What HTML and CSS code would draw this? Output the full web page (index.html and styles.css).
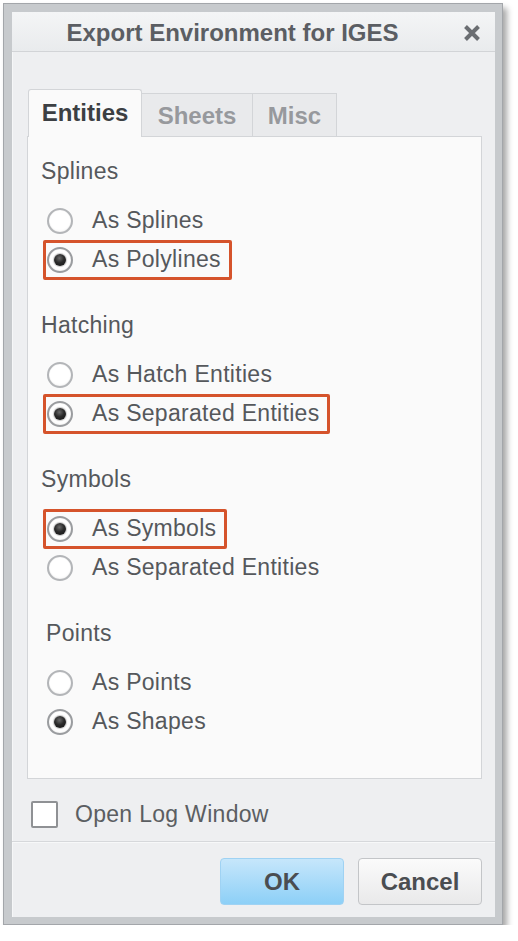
FILE: index.html
```html
<!DOCTYPE html>
<html>
<head>
<meta charset="utf-8">
<link rel="stylesheet" href="styles.css">
</head>
<body>
<div class="dialog">
  <div class="window">
    <div class="titlebar">
      <span class="title">Export Environment for IGES</span>
      <svg class="close" width="18" height="18" viewBox="0 0 18 18"><path d="M2.5 2.5 L15.5 15.5 M15.5 2.5 L2.5 15.5" stroke="#6b6e72" stroke-width="4" stroke-linecap="butt"/></svg>
    </div>
    <div class="content">
      <div class="tabs">
        <div class="tab active">Entities</div>
        <div class="tab">Sheets</div>
        <div class="tab">Misc</div>
      </div>
      <div class="panel">
        <div class="group">
          <div class="label">Splines</div>
          <div class="row"><span class="opt"><span class="radio"></span><span class="text">As Splines</span></span></div>
          <div class="row"><span class="opt hl"><span class="radio on"></span><span class="text">As Polylines</span></span></div>
        </div>
        <div class="group">
          <div class="label">Hatching</div>
          <div class="row"><span class="opt"><span class="radio"></span><span class="text">As Hatch Entities</span></span></div>
          <div class="row"><span class="opt hl"><span class="radio on"></span><span class="text">As Separated Entities</span></span></div>
        </div>
        <div class="group">
          <div class="label">Symbols</div>
          <div class="row"><span class="opt hl"><span class="radio on"></span><span class="text">As Symbols</span></span></div>
          <div class="row"><span class="opt"><span class="radio"></span><span class="text">As Separated Entities</span></span></div>
        </div>
        <div class="group">
          <div class="label indent">Points</div>
          <div class="row"><span class="opt"><span class="radio"></span><span class="text">As Points</span></span></div>
          <div class="row"><span class="opt"><span class="radio on"></span><span class="text">As Shapes</span></span></div>
        </div>
      </div>
      <div class="check-row">
        <span class="checkbox"></span>
        <span class="text">Open Log Window</span>
      </div>
    </div>
    <div class="footer">
      <button class="btn primary">OK</button>
      <button class="btn">Cancel</button>
    </div>
  </div>
</div>
</body>
</html>
```

FILE: styles.css
```css
html, body {
  margin: 0;
  padding: 0;
  background: #ffffff;
}
body {
  font-family: "Liberation Sans", Arial, sans-serif;
  color: #505357;
}
.dialog {
  margin: 3px 0 0 3px;
  width: 500px;
  height: 922px;
  box-sizing: border-box;
  border: 1px solid #a3a6aa;
  background: #c7cacd;
  padding: 8px 7px 7px 8px;
  box-shadow: 4px 5px 6px rgba(0, 0, 0, 0.35);
}
.window {
  height: 100%;
  background: #eeeff1;
  display: flex;
  flex-direction: column;
  box-shadow: inset 1px 1px 0 #f6f7f8;
}
.titlebar {
  height: 40px;
  box-sizing: border-box;
  border-bottom: 1px solid #d2d4d7;
  background: linear-gradient(#f4f5f6, #e9ebed);
  display: flex;
  align-items: center;
  justify-content: center;
  position: relative;
  flex: none;
}
.title {
  font-weight: bold;
  font-size: 24px;
  color: #5b5e63;
  margin-left: -42px;
  margin-top: 2px;
}
.close {
  position: absolute;
  right: 14px;
  top: 12px;
}
.content {
  flex: 1;
  padding: 37px 13px 0 15px;
  display: flex;
  flex-direction: column;
}
.tabs {
  display: flex;
  align-items: flex-end;
  height: 47px;
  margin-left: 1px;
}
.tab {
  height: 43px;
  box-sizing: border-box;
  border: 1px solid #d3d5d8;
  border-bottom: none;
  border-left: none;
  background: #e9eaec;
  font-size: 24px;
  font-weight: bold;
  color: #97999d;
  display: flex;
  align-items: center;
  justify-content: center;
  padding-top: 2px;
}
.tab:nth-child(2) { width: 111px; }
.tab:nth-child(3) { width: 84px; }
.tab.active {
  width: 114px;
  height: 48px;
  margin-bottom: -1px;
  background: #fafafa;
  border-left: 1px solid #d3d5d8;
  border-radius: 3px 3px 0 0;
  color: #3c3f43;
  position: relative;
  z-index: 1;
  padding-top: 0;
  padding-bottom: 1px;
}
.panel {
  height: 643px;
  box-sizing: border-box;
  border: 1px solid #d3d5d8;
  background: #fafafa;
  padding: 19px 0 0 15px;
}
.group {
  margin-bottom: 31px;
}
.label {
  height: 30px;
  line-height: 30px;
  font-size: 23px;
  letter-spacing: 0.3px;
  margin: 0 0 15px -2px;
  color: #55585c;
}
.label.indent {
  margin-left: 3px;
}
.row {
  height: 39px;
  display: flex;
  align-items: center;
}
.opt {
  display: inline-flex;
  align-items: center;
  height: 40px;
  box-sizing: border-box;
  border: 3px solid transparent;
  border-radius: 2px;
  padding: 0 8px 0 1px;
}
.opt.hl {
  border-color: #d5532b;
}
.text {
  font-size: 23px;
  letter-spacing: 0.3px;
  color: #55585c;
}
.radio {
  width: 26px;
  height: 26px;
  box-sizing: border-box;
  border-radius: 50%;
  border: 2px solid #b3b5b8;
  background: radial-gradient(circle at 50% 40%, #ffffff 0, #ffffff 60%, #f0f0f0 100%);
  box-shadow: inset 0 0 1px #d0d0d0;
  margin-right: 19px;
  position: relative;
  flex: none;
}
.radio.on {
  border-color: #9a9c9f;
}
.radio.on::after {
  content: "";
  position: absolute;
  left: 5px;
  top: 5px;
  width: 12px;
  height: 12px;
  border-radius: 50%;
  background: radial-gradient(circle at 45% 35%, #6b6b6b 0, #2a2a2a 45%, #111 100%);
  box-shadow: 0 0 1px 1px #c9c9c9;
}
.check-row {
  display: flex;
  align-items: center;
  height: 27px;
  margin-top: 22px;
  padding-left: 4px;
}
.checkbox {
  width: 27px;
  height: 27px;
  box-sizing: border-box;
  border: 2px solid #8f9194;
  border-radius: 2px;
  background: #ffffff;
  margin-right: 17px;
}
.check-row .text {
  color: #5b5e62;
}
.footer {
  height: 76px;
  box-sizing: border-box;
  flex: none;
  border-top: 1px solid #d6d8db;
  display: flex;
  justify-content: flex-end;
  align-items: flex-start;
  gap: 14px;
  padding: 16px 13px 0 0;
  box-shadow: inset 0 1px 0 #f7f8f9;
}
.btn {
  width: 124px;
  height: 47px;
  box-sizing: border-box;
  border: 1px solid #c3c5c8;
  border-radius: 4px;
  background: linear-gradient(#fbfbfb, #e9e9ea);
  font-family: "Liberation Sans", Arial, sans-serif;
  font-size: 24px;
  font-weight: bold;
  color: #4a4d51;
  padding: 0;
}
.btn.primary {
  border-color: #9fd2f3;
  background: linear-gradient(#c6e6fb, #8dd0f7);
}
```
